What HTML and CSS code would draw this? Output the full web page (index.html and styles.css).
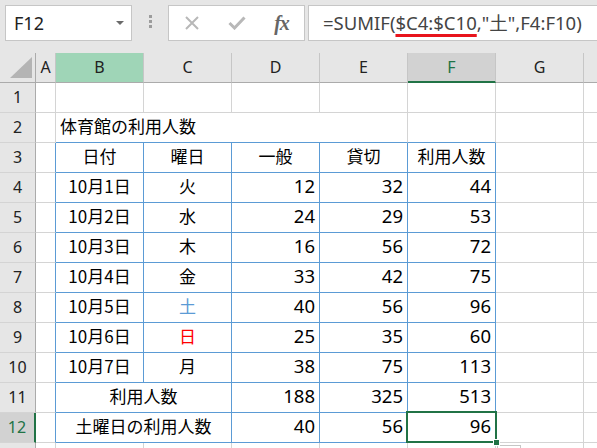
FILE: index.html
```html
<!DOCTYPE html>
<html lang="ja">

<head>
    <meta charset="UTF-8">
    <title>体育館の利用人数</title>
    <link rel="stylesheet" href="styles.css">
</head>

<body>

    <!-- Name box + formula bar -->
    <div class="toolbar">
        <div class="name-box">F12<span class="caret"></span></div>
        <div class="grip"><i></i><i></i><i></i></div>
        <div class="fx-box">
            <span class="fx-btn">
                <svg width="14" height="14" viewBox="0 0 14 14"><path d="M1 1 L13 13 M13 1 L1 13" stroke="#b8b8b8" stroke-width="2" fill="none"/></svg>
            </span>
            <span class="fx-btn">
                <svg width="18" height="14" viewBox="0 0 18 14"><path d="M1.5 7 L6.5 12 L16.5 1.5" stroke="#b8b8b8" stroke-width="3" fill="none"/></svg>
            </span>
            <span class="fx-btn fx-label">fx</span>
        </div>
        <div class="formula">=SUMIF(<span class="ref">$C4:$C10</span>,"土",F4:F10)</div>
    </div>

    <!-- Sheet -->
    <div class="sheet">
        <!-- column headers -->
        <div class="corner"><span class="corner-tri"></span></div>
        <div class="hd">A</div>
        <div class="hd hd-hover">B</div>
        <div class="hd">C</div>
        <div class="hd">D</div>
        <div class="hd">E</div>
        <div class="hd hd-sel">F</div>
        <div class="hd">G</div>
        <div class="hd hd-last"></div>

        <!-- row 1 -->
        <div class="rh">1</div>
        <div class="c"></div><div class="c"></div><div class="c"></div><div class="c"></div>
        <div class="c"></div><div class="c"></div><div class="c"></div><div class="c last"></div>

        <!-- row 2 -->
        <div class="rh">2</div>
        <div class="c"></div>
        <div class="c tt span4">体育館の利用人数</div>
        <div class="c tt"></div>
        <div class="c"></div><div class="c last"></div>

        <!-- row 3 -->
        <div class="rh">3</div>
        <div class="c tl"></div>
        <div class="c t ctr">日付</div>
        <div class="c t ctr">曜日</div>
        <div class="c t ctr">一般</div>
        <div class="c t ctr">貸切</div>
        <div class="c t ctr">利用人数</div>
        <div class="c"></div><div class="c last"></div>

        <!-- row 4 -->
        <div class="rh">4</div>
        <div class="c tl"></div>
        <div class="c t ctr">10月1日</div>
        <div class="c t ctr">火</div>
        <div class="c t num">12</div>
        <div class="c t num">32</div>
        <div class="c t num">44</div>
        <div class="c"></div><div class="c last"></div>

        <!-- row 5 -->
        <div class="rh">5</div>
        <div class="c tl"></div>
        <div class="c t ctr">10月2日</div>
        <div class="c t ctr">水</div>
        <div class="c t num">24</div>
        <div class="c t num">29</div>
        <div class="c t num">53</div>
        <div class="c"></div><div class="c last"></div>

        <!-- row 6 -->
        <div class="rh">6</div>
        <div class="c tl"></div>
        <div class="c t ctr">10月3日</div>
        <div class="c t ctr">木</div>
        <div class="c t num">16</div>
        <div class="c t num">56</div>
        <div class="c t num">72</div>
        <div class="c"></div><div class="c last"></div>

        <!-- row 7 -->
        <div class="rh">7</div>
        <div class="c tl"></div>
        <div class="c t ctr">10月4日</div>
        <div class="c t ctr">金</div>
        <div class="c t num">33</div>
        <div class="c t num">42</div>
        <div class="c t num">75</div>
        <div class="c"></div><div class="c last"></div>

        <!-- row 8 -->
        <div class="rh">8</div>
        <div class="c tl"></div>
        <div class="c t ctr">10月5日</div>
        <div class="c t ctr sat">土</div>
        <div class="c t num">40</div>
        <div class="c t num">56</div>
        <div class="c t num">96</div>
        <div class="c"></div><div class="c last"></div>

        <!-- row 9 -->
        <div class="rh">9</div>
        <div class="c tl"></div>
        <div class="c t ctr">10月6日</div>
        <div class="c t ctr sun">日</div>
        <div class="c t num">25</div>
        <div class="c t num">35</div>
        <div class="c t num">60</div>
        <div class="c"></div><div class="c last"></div>

        <!-- row 10 -->
        <div class="rh">10</div>
        <div class="c tl"></div>
        <div class="c t ctr">10月7日</div>
        <div class="c t ctr">月</div>
        <div class="c t num">38</div>
        <div class="c t num">75</div>
        <div class="c t num">113</div>
        <div class="c"></div><div class="c last"></div>

        <!-- row 11 -->
        <div class="rh">11</div>
        <div class="c tl"></div>
        <div class="c t ctr span2">利用人数</div>
        <div class="c t num">188</div>
        <div class="c t num">325</div>
        <div class="c t num">513</div>
        <div class="c"></div><div class="c last"></div>

        <!-- row 12 -->
        <div class="rh rh-sel">12</div>
        <div class="c tl"></div>
        <div class="c t ctr span2">土曜日の利用人数</div>
        <div class="c t num">40</div>
        <div class="c t num">56</div>
        <div class="c t num active">96<span class="quick"></span></div>
        <div class="c"></div><div class="c last"></div>

        <!-- row 13 -->
        <div class="rh"></div>
        <div class="c"></div><div class="c"></div><div class="c"></div><div class="c"></div>
        <div class="c"></div><div class="c"></div><div class="c"></div><div class="c last"></div>
    </div>

</body>

</html>
```

FILE: styles.css
```css
/* Global */
body {
    margin: 0;
    width: 597px;
    height: 448px;
    overflow: hidden;
    background-color: #e6e6e6;
    font-family: "Noto Sans", "Noto Sans CJK JP", sans-serif;
    color: #000;
}

/* Toolbar (name box + formula bar) */
.toolbar {
    display: flex;
    align-items: flex-start;
    height: 53px;
    padding-top: 5px;
    box-sizing: border-box;
}

.name-box {
    display: flex;
    align-items: center;
    justify-content: space-between;
    width: 127px;
    height: 36px;
    margin-left: 5px;
    padding: 0 7px 0 8px;
    box-sizing: border-box;
    background-color: #fff;
    border: 1px solid #c6c6c6;
    font-size: 18px;
    color: #222;
}

.caret {
    width: 0;
    height: 0;
    border-left: 4px solid transparent;
    border-right: 4px solid transparent;
    border-top: 4px solid #6a6a6a;
}

.grip {
    display: flex;
    flex-direction: column;
    gap: 2px;
    margin: 10px 16px 0 17px;
}

.grip i {
    display: block;
    width: 3px;
    height: 3px;
    background-color: #9c9c9c;
}

.fx-box {
    display: flex;
    align-items: center;
    width: 137px;
    height: 36px;
    box-sizing: border-box;
    background-color: #fff;
    border: 1px solid #c6c6c6;
}

.fx-btn {
    display: flex;
    justify-content: center;
    align-items: center;
    width: 45px;
}

.fx-label {
    font-family: "Liberation Serif", serif;
    font-style: italic;
    font-weight: bold;
    font-size: 20px;
    color: #666;
    letter-spacing: -1px;
}

.formula {
    flex: 1;
    height: 36px;
    margin-left: 3px;
    margin-right: -2px;
    padding-left: 14px;
    box-sizing: border-box;
    background-color: #fff;
    border: 1px solid #c6c6c6;
    font-size: 18.5px;
    line-height: 34px;
    color: #444;
    white-space: nowrap;
}

.ref {
    text-decoration: underline;
    text-decoration-color: #e8141c;
    text-decoration-thickness: 3px;
    text-underline-offset: 4px;
}

/* Sheet grid */
.sheet {
    display: grid;
    grid-template-columns: 36px 20px repeat(6, 88px) 1fr;
    grid-auto-rows: 30px;
    height: 395px;
    overflow: hidden;
    background-color: #fff;
}

.corner, .hd, .rh {
    box-sizing: border-box;
    background-color: #e6e6e6;
    font-size: 16px;
    color: #222;
}

.corner {
    display: flex;
    justify-content: flex-end;
    align-items: flex-end;
    padding: 0 3px 4px 0;
    border-right: 1px solid #ababab;
    border-bottom: 1px solid #ababab;
}

.corner-tri {
    width: 0;
    height: 0;
    border-left: 22px solid transparent;
    border-bottom: 21px solid #b4b4b4;
}

.hd {
    text-align: center;
    line-height: 29px;
    border-right: 1px solid #c6c6c6;
    border-bottom: 1px solid #ababab;
}

.hd-hover {
    background-color: #9fd5b7;
}

.hd-sel {
    background-color: #d2d2d2;
    color: #217346;
    border-bottom: 2px solid #217346;
}

.hd-last {
    border-right: none;
}

.rh {
    text-align: center;
    line-height: 29px;
    border-right: 1px solid #ababab;
    border-bottom: 1px solid #d4d4d4;
}

.rh-sel {
    background-color: #d2d2d2;
    color: #217346;
    border-right: 2px solid #217346;
}

/* Cells */
.c {
    box-sizing: border-box;
    padding: 0 4px;
    border-right: 1px solid #d4d4d4;
    border-bottom: 1px solid #d4d4d4;
    font-family: "Noto Sans CJK JP", sans-serif;
    font-size: 17px;
    line-height: 25px;
    white-space: nowrap;
}

.c.last {
    border-right: none;
}

/* Table borders */
.t {
    border-right-color: #5b9bd5;
    border-bottom-color: #5b9bd5;
}

.tl {
    border-right-color: #5b9bd5;
}

.tt {
    border-bottom-color: #5b9bd5;
}

.span2 {
    grid-column: span 2;
}

.span4 {
    grid-column: span 4;
}

.ctr {
    text-align: center;
}

.num {
    text-align: right;
    font-family: "Noto Sans", sans-serif;
    font-size: 18.5px;
}

.sat {
    color: #5b9bd5;
}

.sun {
    color: #ff0000;
}

/* Active cell */
.active {
    position: relative;
}

.active::before {
    content: "";
    position: absolute;
    left: -2px;
    top: -2px;
    right: -2px;
    bottom: -1px;
    border: 2px solid #217346;
}

.active::after {
    content: "";
    position: absolute;
    right: -4px;
    bottom: -3px;
    width: 5px;
    height: 5px;
    background-color: #217346;
    outline: 1px solid #fff;
}

.quick {
    position: absolute;
    left: 89px;
    top: 32px;
    width: 24px;
    height: 20px;
    box-sizing: border-box;
    border: 1px solid #c6c6c6;
    background-color: #fff;
}
```
